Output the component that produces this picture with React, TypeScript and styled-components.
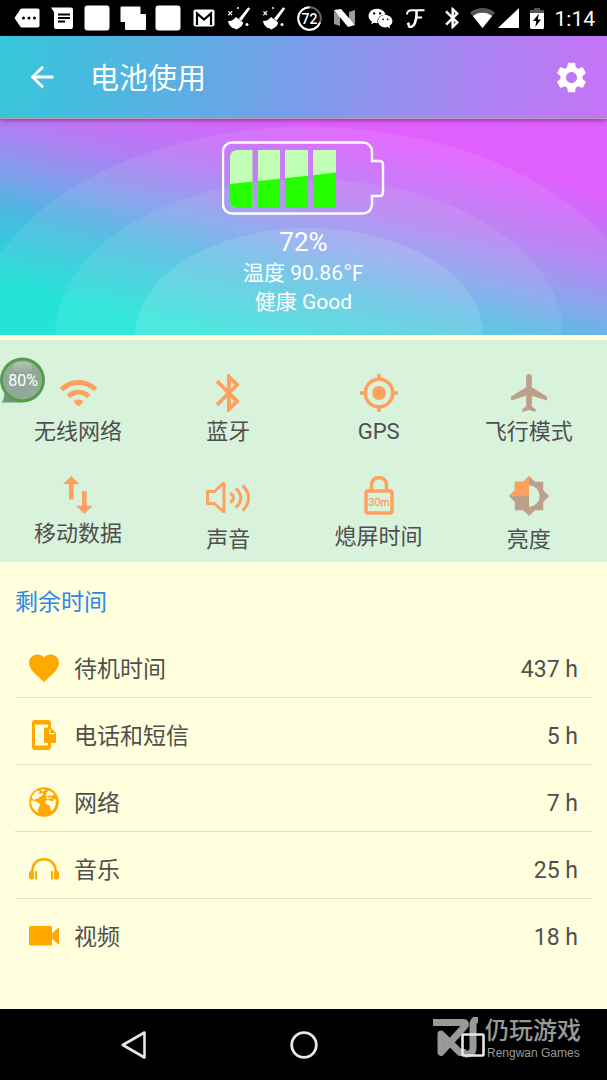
import React from "react";
import styled, { createGlobalStyle } from "styled-components";
import { FaWeixin } from "react-icons/fa";
import { MdSettings, MdArrowBack } from "react-icons/md";

const GlobalStyle = createGlobalStyle`
  *, *::before, *::after { box-sizing: border-box; }
  body {
    margin: 0;
    background: #ffffdd;
    color: #4f4f4f;
    font-family: Roboto, "Noto Sans CJK SC", sans-serif;
  }
  button {
    border: 0;
    padding: 0;
    background: none;
    color: inherit;
    font: inherit;
    cursor: pointer;
  }
  h1, h2, p, dl, dt, dd { margin: 0; font-weight: 400; }
  svg { display: block; flex: none; }
`;

const Page = styled.div`
  display: flex;
  flex-direction: column;
  min-height: 100vh;
`;

const StatusBar = styled.div`
  display: flex;
  align-items: center;
  gap: 11px;
  height: 36px;
  padding: 0 12px 0 9px;
  background: #000;
  color: #fff;
`;

const Notifications = styled.div`
  display: grid;
  grid-template-columns: repeat(12, 1fr);
  flex: 1;
  justify-items: center;
  align-items: center;
`;

const SystemIcons = styled.div`
  display: flex;
  align-items: center;
  gap: 11px;
`;

const SignalPair = styled.span`
  display: flex;
  align-items: center;
  gap: 3px;
`;

const Clock = styled.time`
  padding-top: 2px;
  font-size: 21px;
  line-height: 32px;
`;

const AppBar = styled.header`
  position: relative;
  display: flex;
  align-items: center;
  height: 83px;
  padding: 0 17px 0 25px;
  background: linear-gradient(93deg, #36c6da 0%, #5baee3 30%, #7b9ce9 50%, #a985f2 77%, #c673f6 100%);
  border-bottom: 1px solid #bb9cb4;
  box-shadow: 0 1px 5px rgba(60, 0, 60, 0.5);
  color: #fff;
`;

const Title = styled.h1`
  flex: 1;
  margin-left: 31px;
  padding-top: 4px;
  font-size: 29px;
  line-height: 40px;
`;

const Hero = styled.section`
  position: relative;
  isolation: isolate;
  z-index: -1;
  display: flex;
  flex-direction: column;
  align-items: center;
  height: 216px;
  padding-top: 22px;
  background: linear-gradient(13deg, #12e2d4 14%, #52b4e2 37%, #7f9fec 46%, #b47cf3 60%, #e060fe 80%);
  color: #fff;
`;

const Arcs = styled.svg`
  position: absolute;
  z-index: -1;
  inset: 0;
  width: 100%;
  height: 100%;
`;

const Level = styled.p`
  margin-top: 10px;
  font-size: 26px;
  line-height: 34px;
`;

const Reading = styled.p`
  font-size: 21px;
  line-height: 29px;
`;

const QuickPanel = styled.section`
  position: relative;
  display: grid;
  grid-template-columns: repeat(4, 1fr);
  align-items: start;
  row-gap: 28px;
  margin-top: 5px;
  padding: 34px 3px 6px;
  background: #d8f2dc;
`;

const Tile = styled.button<{ $off?: boolean }>`
  display: flex;
  flex-direction: column;
  align-items: center;
  gap: 4px;

  svg { color: ${(p) => (p.$off ? "#bda08a" : "#ffa05e")}; }
`;

const TileLabel = styled.span`
  font-size: 22px;
  line-height: 32px;
`;

const Bubble = styled.button`
  position: absolute;
  top: 17px;
  left: 0;
  display: grid;
  place-items: center;
  color: #fff;
  font-size: 16px;
  line-height: 40px;

  > * { grid-area: 1 / 1; }
`;

const BubbleText = styled.span`
  z-index: 1;
  padding-top: 2px;
`;

const Remaining = styled.section`
  flex: 1;
  padding: 25px 15px 24px;
`;

const SectionTitle = styled.h2`
  margin-bottom: 11px;
  color: #2f86e8;
  font-size: 23px;
  line-height: 32px;
`;

const Row = styled.div`
  display: flex;
  align-items: center;
  gap: 15px;
  height: 67px;
  padding: 8px 14px 0;
  font-size: 23px;
  line-height: 32px;

  & + & { border-top: 1px solid #dedfc8; }
  svg { color: #ffa800; }
  dt, dd { padding-top: 4px; }
`;

const RowLabel = styled.dt`
  flex: 1;
`;

const NavBar = styled.nav`
  position: relative;
  display: grid;
  grid-template-columns: repeat(3, 1fr);
  height: 71px;
  padding: 0 8%;
  background: #000;
  color: #e6e6e6;
`;

const NavButton = styled.button`
  position: relative;
  z-index: 1;
  display: grid;
  place-items: center;
`;

const Watermark = styled.div`
  position: absolute;
  top: 8px;
  right: 26px;
  display: flex;
  gap: 6px;
  color: #b4b4b4;
  opacity: 0.85;
  pointer-events: none;
`;

const WatermarkWords = styled.div`
  display: flex;
  flex-direction: column;
`;

const BrandName = styled.span`
  font-size: 24px;
  font-weight: 500;
  line-height: 28px;
`;

const BrandLatin = styled.span`
  padding-left: 2px;
  font-family: "Liberation Sans", sans-serif;
  font-size: 12px;
  line-height: 16px;
`;

const BT_PATH =
  "M17.71 7.71L12 2h-1v7.59L6.41 5 5 6.41 10.59 12 5 17.59 6.41 19 11 14.41V22h1l5.71-5.71-4.3-4.29 4.3-4.29zM13 5.83l1.88 1.88L13 9.59V5.83zm1.88 10.46L13 18.17v-3.76l1.88 1.88z";

const Broom = () => (
  <svg width="24" height="24" viewBox="0 0 24 24" fill="currentColor">
    <path d="M21.200 1.200l2 1.300-8.600 12.300-2.800-2z" />
    <path d="M9 11l7 5.300c0 3-2.500 5.700-6.800 7.100-1-.3-1.600-.9-2-1.500l-1.200.3C3 20.600 1.500 18 1 15c3.400.4 5.300-.8 8-4z" />
    <path d="M1.500 5.500l3.500 3.600M5.200 5.200L1.300 9.300" stroke="currentColor" strokeWidth="1.200" />
    <circle cx="11" cy="2" r="1" />
    <circle cx="20" cy="18.500" r="1.500" />
  </svg>
);

const Square = () => (
  <svg width="26" height="26" viewBox="0 0 26 26" fill="currentColor">
    <rect x="0.500" y="0.500" width="25" height="25" rx="3" />
  </svg>
);

const StatusIcons = () => (
  <Notifications>
    <svg width="26" height="20" viewBox="0 0 26 20">
      <path d="M8 .5h15.500a2 2 0 0 1 2 2v15a2 2 0 0 1-2 2H8a2 2 0 0 1-1.600-.8L.5 10l5.900-8.700A2 2 0 0 1 8 .5z" fill="#fff" />
      <circle cx="9.500" cy="10" r="1.500" />
      <circle cx="15" cy="10" r="1.500" />
      <circle cx="20.500" cy="10" r="1.500" />
    </svg>
    <svg width="22" height="22" viewBox="0 0 22 22">
      <path d="M0 .5h20a2 2 0 0 1 2 2V20a2 2 0 0 1-2 2H5a2 2 0 0 1-2-2V5z" fill="#fff" />
      <path d="M7 7.500h12M7 11h12M7 14.500h7" stroke="#000" strokeWidth="1.800" />
    </svg>
    <Square />
    <svg width="26" height="24" viewBox="0 0 26 24" fill="#fff">
      <path d="M1.500.5h18a1 1 0 0 1 1 1V8H25a1 1 0 0 1 1 1v14a1 1 0 0 1-1 1H6a1 1 0 0 1-1-1v-7H1.500a1 1 0 0 1-1-1V1.500a1 1 0 0 1 1-1z" />
    </svg>
    <Square />
    <svg width="22" height="18" viewBox="0 0 22 18">
      <rect x="0.500" y="0.500" width="21" height="17" rx="2" fill="#fff" />
      <path d="M4 16V4.500l7 6 7-6V16" fill="none" stroke="#000" strokeWidth="2.200" />
    </svg>
    <Broom />
    <Broom />
    <svg width="25" height="25" viewBox="0 0 25 25">
      <circle cx="12.500" cy="12.500" r="11.300" fill="none" stroke="#666" strokeWidth="2" />
      <path d="M23.100 16.500A11.300 11.300 0 1 1 12.500 1.200" fill="none" stroke="#fff" strokeWidth="2" />
      <text x="12.500" y="17.500" fill="#fff" fontSize="14" fontWeight="500" textAnchor="middle">72</text>
    </svg>
    <svg width="22" height="18" viewBox="0 0 22 18">
      <path d="M0 2l6 5v10l-6-2zM15 3l6-2v14l-6-4z" fill="#999" />
      <path d="M0 1l7-1 14 16-7 2z" fill="#fff" />
    </svg>
    <FaWeixin size={25} />
    <svg width="19" height="19" viewBox="0 0 19 19" fill="none" stroke="#fff">
      <path d="M1 5.500C1 2.500 3 1.300 6 1.300h12.500M11 8.500h5" strokeWidth="2" />
      <path d="M10.500 2c.4 5-.4 9-1.800 12.500C7.500 17.600 4.500 18.600 2 17" strokeWidth="2.600" />
      <circle cx="2.500" cy="15" r="1.200" fill="#fff" />
    </svg>
  </Notifications>
);

const WifiIcon = () => (
  <svg width="41" height="38" viewBox="0 1 24 22" fill="currentColor">
    <path d="M1 9l2 2c4.970-4.970 13.030-4.970 18 0l2-2C16.930 2.930 7.080 2.930 1 9zm8 8l3 3 3-3c-1.650-1.660-4.340-1.660-6 0zm-4-4l2 2c2.760-2.760 7.240-2.760 10 0l2-2C15.140 9.140 8.870 9.140 5 13z" />
  </svg>
);

const BluetoothIcon = () => (
  <svg width="38" height="38" viewBox="1.500 2 20 20" fill="currentColor">
    <path d={BT_PATH} />
  </svg>
);

const GpsIcon = () => (
  <svg width="38" height="38" viewBox="1 1 22 22" fill="currentColor">
    <circle cx="12" cy="12" r="4" />
    <path d="M20.940 11A8.994 8.994 0 0 0 13 3.060V1h-2v2.060A8.994 8.994 0 0 0 3.060 11H1v2h2.060A8.994 8.994 0 0 0 11 20.940V23h2v-2.060A8.994 8.994 0 0 0 20.940 13H23v-2h-2.060zM12 19c-3.870 0-7-3.130-7-7s3.130-7 7-7 7 3.130 7 7-3.130 7-7 7z" />
  </svg>
);

const PlaneIcon = () => (
  <svg width="38" height="38" viewBox="1.500 2 20 20" fill="currentColor">
    <path d="M21 16v-2l-8-5V3.500c0-.83-.67-1.500-1.500-1.500S10 2.670 10 3.500V9l-8 5v2l8-2.500V19l-2 1.500V22l3.500-1 3.500 1v-1.500L13 19v-5.500l8 2.500z" />
  </svg>
);

const DataIcon = () => (
  <svg width="30" height="38" viewBox="0 0 30 38" fill="currentColor">
    <path d="M8.300 0l8.200 8.300h-6V23.500H6V8.300H0zM21.400 38l-8.300-8.300H19V15h4.600v14.700h6z" />
  </svg>
);

const SoundIcon = () => (
  <svg width="44" height="44" viewBox="0 0 44 44" fill="none" stroke="currentColor" strokeWidth="3">
    <path d="M1.500 15.500h7l8.500-8h1v28h-1l-8.500-8h-7z" strokeLinejoin="round" />
    <path d="M24 17.500c4.500 1.500 4.500 7 0 9" />
    <path d="M29.500 12.500c7 5 7 14 0 19" />
    <path d="M36.500 9.500c8 7 8 18 0 25" />
  </svg>
);

const LockIcon = () => (
  <svg width="30" height="41" viewBox="0 0 30 41">
    <path d="M7.500 14V8.500a7.500 7 0 0 1 15 0V14" fill="none" stroke="currentColor" strokeWidth="3.500" />
    <rect x="2" y="15" width="26" height="22" rx="2" fill="none" stroke="currentColor" strokeWidth="3.500" />
    <text x="15" y="30" fill="currentColor" stroke="currentColor" strokeWidth="0.300" fontSize="11" textAnchor="middle" fontFamily="Liberation Sans, sans-serif">30m</text>
  </svg>
);

const BrightnessIcon = () => (
  <svg width="44" height="44" viewBox="-0.400 0.700 24.800 24.800" fill="currentColor">
    <path d="M20 15.310L23.310 12 20 8.690V4h-4.690L12 .69 8.690 4H4v4.690L.69 12 4 15.310V20h4.690L12 23.310 15.310 20H20v-4.690zM12 18V6c3.310 0 6 2.690 6 6s-2.690 6-6 6z" />
    <polygon points="12,12 12,0.690 8.690,4 4,4 4,8.690 0.690,12" fill="#ffa05e" />
  </svg>
);

const PhoneIcon = () => (
  <svg width="30" height="30" viewBox="0 0 30 30">
    <path fill="currentColor" d="M6 0h13a3 3 0 0 1 3 3v5h-3V4.500H6v21h13V23h3v4a3 3 0 0 1-3 3H6a3 3 0 0 1-3-3V3a3 3 0 0 1 3-3z" />
    <path fill="currentColor" d="M16.500 7.500h5L27 13v8.500a1.500 1.500 0 0 1-1.500 1.500h-9a1.500 1.500 0 0 1-1.500-1.500V9a1.500 1.500 0 0 1 1.500-1.500z" />
    <path d="M20.800 9v4.700h4.700" fill="none" stroke="#ffffdd" strokeWidth="1.300" />
  </svg>
);

const GlobeIcon = () => (
  <svg width="30" height="30" viewBox="0 0 30 30">
    <circle cx="15" cy="15" r="14.800" fill="currentColor" />
    <g fill="#ffffdd">
      <path d="M2.500 11c1-3.500 3-6 6-7.500l2.500 1-1.500 2 2 .5 1.500-1.500 1 2-2.500 2.500-1-.5-1.500 2.500-2-.5-1.500 1.500z" />
      <path d="M12 2.800l3-.6 1.500.8-2 1.500-2-.3z" />
      <path d="M2 13.500l3.500.3 3 1.500 2.800 2.200-1.300 3-1 2.500.3 2.700C5 24 2 19.500 2 13.500z" />
      <path d="M17.500 5.500l2-2c2.500.8 4.500 2.200 6 4.300l-2 .3-1.500 1.500-1.500-1.500-2 1.500-1.800-1z" />
      <path d="M16.500 10.500l2.500-.8 1.500 1.300 1.500-.8 1 1.300h-3l-1.500.8z" />
      <path d="M16 14.500l2-1.500 4 .8 1.500 1 1-2.500 2-.3c1.200 4.500-.3 9-3.500 12l-1.500-1-.3-3.200-1.200-1.800-2.500-.3z" />
    </g>
  </svg>
);

const HeadphonesIcon = () => (
  <svg width="30" height="30" viewBox="0 0 30 30" fill="currentColor">
    <path d="M3.200 18C3.200 10 8 5.300 15 5.300S26.800 10 26.800 18" fill="none" stroke="currentColor" strokeWidth="2.600" />
    <rect x="0" y="17" width="5" height="8.500" rx="2" />
    <rect x="6" y="17" width="2" height="8.500" rx="1" />
    <rect x="25" y="17" width="5" height="8.500" rx="2" />
    <rect x="22" y="17" width="2" height="8.500" rx="1" />
  </svg>
);

const VideoIcon = () => (
  <svg width="30" height="30" viewBox="0 0 30 30" fill="currentColor">
    <path d="M1.500 5h20A1.500 1.500 0 0 1 23 6.500v6L30 6v18l-7-6.500v5.500a1.500 1.500 0 0 1-1.500 1.500h-20A1.500 1.500 0 0 1 0 23V6.500A1.500 1.500 0 0 1 1.500 5z" />
  </svg>
);

const HeartIcon = () => (
  <svg width="30" height="30" viewBox="2 2 20 20" fill="currentColor">
    <path d="M12 21.350l-1.450-1.320C5.400 15.360 2 12.280 2 8.500 2 5.420 4.420 3 7.500 3c1.740 0 3.410.81 4.500 2.090C13.090 3.810 14.760 3 16.500 3 19.580 3 22 5.420 22 8.500c0 3.780-3.400 6.860-8.550 11.540L12 21.350z" />
  </svg>
);

const BatteryGauge = () => (
  <svg width="163" height="74" viewBox="0 0 163 74">
    <path
      d="M10 1.500h131a9 9 0 0 1 9 9v9.500h8a3 3 0 0 1 3 3v29a3 3 0 0 1-3 3h-8v8.500a9 9 0 0 1-9 9H10a9 9 0 0 1-9-9v-53a9 9 0 0 1 9-9z"
      fill="none"
      stroke="#fff"
      strokeWidth="2.400"
    />
    <path d="M15 9h15.500v58H15a7 7 0 0 1-7-7V16a7 7 0 0 1 7-7zM36 9h22v58H36zM63 9h23v58H63zM91 9h23v58H91z" fill="#c0ffb4" />
    <path d="M8 43l22.500-2.500V67H15a7 7 0 0 1-7-7zM36 40l22-2.300V67H36zM63 37.200l23-2.500V67H63zM91 34.200l23-2.700V67H91z" fill="#25ff00" />
  </svg>
);

const tiles = [
  { label: "无线网络", icon: <WifiIcon /> },
  { label: "蓝牙", icon: <BluetoothIcon /> },
  { label: "GPS", icon: <GpsIcon /> },
  { label: "飞行模式", icon: <PlaneIcon />, off: true },
  { label: "移动数据", icon: <DataIcon /> },
  { label: "声音", icon: <SoundIcon /> },
  { label: "熄屏时间", icon: <LockIcon /> },
  { label: "亮度", icon: <BrightnessIcon />, off: true },
];

const rows = [
  { label: "待机时间", value: "437 h", icon: <HeartIcon /> },
  { label: "电话和短信", value: "5 h", icon: <PhoneIcon /> },
  { label: "网络", value: "7 h", icon: <GlobeIcon /> },
  { label: "音乐", value: "25 h", icon: <HeadphonesIcon /> },
  { label: "视频", value: "18 h", icon: <VideoIcon /> },
];

export default function App() {
  return (
    <Page>
      <GlobalStyle />
      <StatusBar>
        <StatusIcons />
        <SystemIcons>
          <svg width="14" height="22" viewBox="4.500 2 13.500 20" fill="currentColor">
            <path d={BT_PATH} stroke="currentColor" strokeWidth="0.500" />
          </svg>
          <SignalPair>
            <svg width="25" height="20" viewBox="0 0 25 20">
              <path d="M12.500 20L0 4.500C7-1.500 18-1.500 25 4.500z" fill="#555" />
              <path d="M12.500 20L2.800 8c5.500-4.500 14-4.500 19.400 0z" fill="#fff" />
            </svg>
            <svg width="21" height="20" viewBox="0 0 21 20">
              <path d="M21 0v20H0z" fill="#fff" />
            </svg>
          </SignalPair>
          <svg width="14" height="21" viewBox="0 0 14 21">
            <path d="M4 0h6v2h4v4H0V2h4z" fill="#555" />
            <path d="M0 5h14v14.500a1.500 1.500 0 0 1-1.500 1.500h-11A1.500 1.500 0 0 1 0 19.500z" fill="#fff" />
            <path d="M9 5.500L3 13h3.300l-1 6L11 11.500H7.800z" fill="#000" />
          </svg>
          <Clock>1:14</Clock>
        </SystemIcons>
      </StatusBar>

      <AppBar>
        <button type="button" aria-label="返回">
          <MdArrowBack size={34} />
        </button>
        <Title>电池使用</Title>
        <button type="button" aria-label="设置">
          <MdSettings size={37} />
        </button>
      </AppBar>

      <Hero>
        <Arcs viewBox="0 0 607 216" preserveAspectRatio="none" fill="#fff">
          <ellipse cx="309" cy="216" rx="335" ry="208" fillOpacity="0.080" />
          <ellipse cx="309" cy="216" rx="254" ry="156" fillOpacity="0.080" />
          <ellipse cx="309" cy="216" rx="174" ry="107" fillOpacity="0.120" />
        </Arcs>
        <BatteryGauge />
        <Level>72%</Level>
        <Reading>温度 90.86℉</Reading>
        <Reading>健康 Good</Reading>
      </Hero>

      <QuickPanel>
        {tiles.map((t) => (
          <Tile key={t.label} type="button" $off={t.off}>
            {t.icon}
            <TileLabel>{t.label}</TileLabel>
          </Tile>
        ))}
        <Bubble type="button">
          <svg width="46" height="46" viewBox="0 0 46 46">
            <defs>
              <linearGradient id="gloss" x1="0" y1="0" x2="0" y2="1">
                <stop offset="0" stopColor="#fff" stopOpacity="0.300" />
                <stop offset="1" stopColor="#fff" stopOpacity="0.050" />
              </linearGradient>
            </defs>
            <path d="M1 45.500c3-2 3-5 3-9l18 9z" fill="#6c9b73" />
            <circle cx="22.500" cy="23" r="22.500" fill="#6f8a78" />
            <circle cx="22.500" cy="23" r="20.500" fill="#94a899" stroke="#43a935" strokeWidth="2" />
            <ellipse cx="22.500" cy="10" rx="10" ry="5.500" fill="url(#gloss)" />
          </svg>
          <BubbleText>80%</BubbleText>
        </Bubble>
      </QuickPanel>

      <Remaining>
        <SectionTitle>剩余时间</SectionTitle>
        <dl>
          {rows.map((r) => (
            <Row key={r.label}>
              {r.icon}
              <RowLabel>{r.label}</RowLabel>
              <dd>{r.value}</dd>
            </Row>
          ))}
        </dl>
      </Remaining>

      <NavBar>
        <NavButton type="button" aria-label="后退">
          <svg width="26" height="28" viewBox="0 0 26 28" fill="none" stroke="currentColor" strokeWidth="2.600" strokeLinejoin="round">
            <path d="M23.500 1.500v25L1.800 14z" />
          </svg>
        </NavButton>
        <NavButton type="button" aria-label="主屏幕">
          <svg width="28" height="28" viewBox="0 0 28 28" fill="none" stroke="currentColor" strokeWidth="2.800">
            <circle cx="14" cy="14" r="12.300" />
          </svg>
        </NavButton>
        <NavButton type="button" aria-label="最近任务">
          <svg width="24" height="24" viewBox="0 0 24 24" fill="none" stroke="currentColor" strokeWidth="2.600">
            <rect x="1.500" y="1.500" width="21" height="21" rx="1" />
          </svg>
        </NavButton>
        <Watermark>
          <svg width="46" height="42" viewBox="0 0 46 42" fill="none" stroke="currentColor" strokeWidth="7" strokeLinejoin="round">
            <path d="M0 5.500h30c3 0 3 2 1.500 4L8 35.500V17l19 18.500h6" />
            <path d="M45 2.500c-4 0-5 2-5 6V31c0 4-2 6.500-8 6" />
          </svg>
          <WatermarkWords>
            <BrandName>仍玩游戏</BrandName>
            <BrandLatin>Rengwan Games</BrandLatin>
          </WatermarkWords>
        </Watermark>
      </NavBar>
    </Page>
  );
}
